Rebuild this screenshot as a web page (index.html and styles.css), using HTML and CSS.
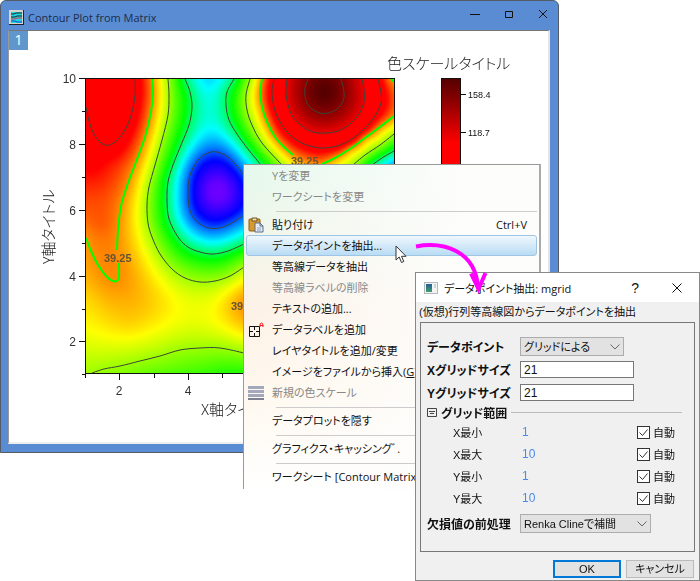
FILE: index.html
```html
<!DOCTYPE html>
<html lang="ja">
<head>
    <meta charset="UTF-8">
    <meta name="viewport" content="width=device-width, initial-scale=1.0">
    <title>Contour Plot from Matrix</title>
    <link rel="stylesheet" href="styles.css">
</head>
<body>
    <div class="desktop">

        <!-- Graph window -->
        <section class="graph-window">
            <header class="graph-titlebar">
                <svg class="app-icon" width="15" height="15" viewBox="0 0 15 15">
                    <rect width="15" height="15" fill="#222"/>
                    <rect width="14" height="14" fill="#d8d4cc"/>
                    <rect x="2" y="2" width="11" height="11" fill="#18d8e0"/>
                    <path d="M2 4h3l2-1h6M2 7h4l2-1h5" stroke="#222" fill="none"/>
                    <path d="M2 9h4l2-1h5" stroke="#e03060" fill="none"/>
                    <path d="M2 11h4l2 1h5" stroke="#2040d0" fill="none"/>
                </svg>
                <h1>Contour Plot from Matrix</h1>
                <div class="window-buttons">
                    <button type="button" aria-label="Minimize"><svg width="10" height="10" viewBox="0 0 10 10"><path d="M0 5.5h10"/></svg></button>
                    <button type="button" aria-label="Maximize"><svg width="10" height="10" viewBox="0 0 10 10"><path d="M1.5 2.5h7v6h-7z"/></svg></button>
                    <button type="button" aria-label="Close"><svg width="10" height="10" viewBox="0 0 10 10"><path d="M1 1l8 8M9 1l-8 8"/></svg></button>
                </div>
            </header>
            <div class="graph-page">
                <span class="layer-badge">1</span>
                <svg class="graph" width="540" height="411" viewBox="9 31 540 411">
                    <defs>
                        <linearGradient id="scale" x1="0" y1="0" x2="0" y2="1">
                            <stop offset="0" stop-color="#560000"/>
                            <stop offset="0.17" stop-color="#7d0000"/>
                            <stop offset="0.65" stop-color="#ff0000"/>
                        </linearGradient>
                    </defs>
                    <foreignObject x="86" y="79" width="308" height="295">
                        <canvas id="field" class="field" width="154" height="148"></canvas>
                    </foreignObject>
                    <g id="contours" class="contours"></g>
                    <rect x="85.5" y="78.5" width="309" height="295" fill="none" stroke="#111"/>
                    <path class="ticks" d="M79 78.5h7M82 111.5h4M79 144.5h7M82 177.5h4M79 210.5h7M82 243.5h4M79 276.5h7M82 309.5h4M79 341.5h7M82 374.5h4M85.5 374v4M119.5 374v6M154.5 374v4M188.5 374v6M222.5 374v4"/>
                    <g class="axis-text" text-anchor="end">
                        <text x="76" y="83">10</text>
                        <text x="76" y="149">8</text>
                        <text x="76" y="215">6</text>
                        <text x="76" y="281">4</text>
                        <text x="76" y="346">2</text>
                    </g>
                    <g class="axis-text" text-anchor="middle">
                        <text x="119" y="395">2</text>
                        <text x="188" y="395">4</text>
                    </g>
                    <g class="contour-text">
                        <text x="104" y="262">39.25</text>
                        <text x="231" y="310">39.25</text>
                        <text x="291" y="165">39.25</text>
                    </g>
                    <text class="graph-title" x="201" y="415">X軸タイトル</text>
                    <text class="graph-title" transform="translate(54 264) rotate(-90)">Y軸タイトル</text>
                    <text class="graph-title" x="387" y="69">色スケールタイトル</text>
                    <rect x="441.5" y="78.5" width="19" height="100" fill="url(#scale)" stroke="#111"/>
                    <path class="ticks" d="M461 94.5h5M461 132.5h5"/>
                    <g class="scale-text">
                        <text x="468" y="98">158.4</text>
                        <text x="468" y="136">118.7</text>
                    </g>
                </svg>
            </div>
        </section>

        <!-- Context menu -->
        <menu class="context-menu">
            <li><button type="button" disabled>Yを変更</button></li>
            <li><button type="button" disabled>ワークシートを変更</button></li>
            <li class="separator"></li>
            <li>
                <button type="button">
                    <svg class="menu-icon" width="16" height="16" viewBox="0 0 16 16">
                        <rect x="1" y="2" width="11" height="12" rx="1" fill="#d99a2b" stroke="#8a5d18"/>
                        <path d="M4 1h5v3H4z" fill="#f3dfa0" stroke="#6b5530"/>
                        <path d="M7 6h5l3 3v6H7z" fill="#e4ebf5" stroke="#5c6c88"/>
                        <path d="M12 6v3h3" fill="none" stroke="#5c6c88"/>
                        <path d="M9 11h4M9 13h4" stroke="#8fa2c0"/>
                    </svg>
                    貼り付け<kbd>Ctrl+V</kbd>
                </button>
            </li>
            <li><button type="button" class="active">データポイントを抽出...</button></li>
            <li><button type="button">等高線データを抽出</button></li>
            <li><button type="button" disabled>等高線ラベルの削除</button></li>
            <li><button type="button">テキストの追加...</button></li>
            <li>
                <button type="button">
                    <svg class="menu-icon" width="16" height="16" viewBox="0 0 16 16">
                        <path d="M1.5 4.5h10v10h-10z" fill="none" stroke="#111"/>
                        <path d="M6.5 5v3M6.5 11v3M2 9.5h3M8 9.5h3" stroke="#111"/>
                        <path d="M12 5V3q0-2 1.500-2T15 3v2M12 3.500h3" fill="none" stroke="#f01818"/>
                    </svg>
                    データラベルを追加
                </button>
            </li>
            <li><button type="button">レイヤタイトルを追加/変更</button></li>
            <li><button type="button">イメージをファイルから挿入(<u>G</u>)...</button></li>
            <li>
                <button type="button" disabled>
                    <svg class="menu-icon" width="16" height="16" viewBox="0 0 16 16">
                        <path d="M0 2.500h16M0 6.500h16M0 10.500h16" stroke="#a3a8bc" stroke-width="3"/>
                        <path d="M0 14h16" stroke="#7d8194" stroke-width="2"/>
                    </svg>
                    新規の色スケール
                </button>
            </li>
            <li class="separator"></li>
            <li><button type="button">データプロットを隠す</button></li>
            <li class="separator"></li>
            <li><button type="button">グラフィクス・キャッシングﾞ.</button></li>
            <li class="separator"></li>
            <li><button type="button">ワークシート [Contour Matrix]</button></li>
        </menu>

        <!-- Extract dialog -->
        <form class="dialog" id="extract-form">
            <header class="dialog-titlebar">
                <svg width="14" height="12" viewBox="0 0 14 12">
                    <defs>
                        <linearGradient id="icon-fill" x1="0" y1="0" x2="0" y2="1">
                            <stop offset="0" stop-color="#2a5a94"/>
                            <stop offset="1" stop-color="#3fa070"/>
                        </linearGradient>
                    </defs>
                    <rect x="0.5" y="0.5" width="13" height="11" fill="#f4f4f4" stroke="#b4b8bc"/>
                    <rect x="2" y="2" width="6" height="8" fill="url(#icon-fill)"/>
                    <path d="M10 3h2M10 5h2" stroke="#9bb"/>
                </svg>
                <h2>データポイント抽出: mgrid</h2>
                <button type="button" class="help">?</button>
                <button type="button" aria-label="閉じる"><svg width="10" height="10" viewBox="0 0 10 10"><path d="M0.5 0.5l9 9M9.5 0.5l-9 9"/></svg></button>
            </header>
            <p class="description">(仮想)行列等高線図からデータポイントを抽出</p>
            <div class="panel">
                <div class="row">
                    <label for="data-points">データポイント</label>
                    <select id="data-points" class="short"><option>グリッドによる</option></select>
                </div>
                <div class="row">
                    <label for="x-size">Xグリッドサイズ</label>
                    <input type="text" id="x-size" value="21">
                </div>
                <div class="row">
                    <label for="y-size">Yグリッドサイズ</label>
                    <input type="text" id="y-size" value="21">
                </div>
                <fieldset>
                    <legend>
                        <svg width="10" height="9" viewBox="0 0 10 9"><path d="M0.5 0.5h9v8h-9zM2 3.5h6M3 5.5h4" fill="none" stroke="#444"/></svg>
                        グリッド範囲
                    </legend>
                    <div class="range-row"><span>X最小</span><output>1</output><label><input type="checkbox" checked>自動</label></div>
                    <div class="range-row"><span>X最大</span><output>10</output><label><input type="checkbox" checked>自動</label></div>
                    <div class="range-row"><span>Y最小</span><output>1</output><label><input type="checkbox" checked>自動</label></div>
                    <div class="range-row"><span>Y最大</span><output>10</output><label><input type="checkbox" checked>自動</label></div>
                </fieldset>
                <div class="row">
                    <label for="missing">欠損値の前処理</label>
                    <select id="missing"><option>Renka Clineで補間</option></select>
                </div>
            </div>
            <footer class="dialog-buttons">
                <button type="submit" class="default">OK</button>
                <button type="button">キャンセル</button>
            </footer>
        </form>

        <!-- Pointer and arrow from the menu item to the dialog -->
        <svg class="pointer" width="12" height="19" viewBox="0 0 12 19">
            <path d="M1 1v14l3.200-3 2.300 5.500 2.300-1-2.300-5.200H11z" fill="#fff" stroke="#333"/>
        </svg>
        <svg class="arrow" width="74" height="54" viewBox="414 240 74 54">
            <path d="M416 246.500c26-5 60 3 62 42" fill="none" stroke="#ff00ff" stroke-width="4"/>
            <path d="M471 273.500l7.500 15.500 7-16" fill="none" stroke="#ff00ff" stroke-width="4"/>
        </svg>
    </div>

    <script src="contour.js"></script>
</body>
</html>
```
FILE: styles.css
```css
* {
    box-sizing: border-box;
}

body {
    margin: 0;
    background-color: #fff;
    color: #111;
    font-family: "Open Sans", "Noto Sans CJK JP", sans-serif;
    font-size: 11px;
}

button,
input,
select {
    font: inherit;
    color: inherit;
}

.desktop {
    position: relative;
    min-height: 581px;
    overflow: hidden;
}

/* Graph window */
.graph-window {
    margin-right: 141px;
    padding: 0 8px 8px 7px;
    background-color: #5a8cd4;
    border: 1px solid #555b66;
    border-radius: 6px 6px 0 0;
}

.graph-titlebar {
    display: flex;
    align-items: center;
    gap: 4px;
    height: 29px;
    padding-top: 4px;
    padding-left: 1px;
}

.graph-titlebar h1 {
    flex: 1;
    margin: 0;
    color: #1c2c48;
    font-size: 11px;
    font-weight: normal;
}

.window-buttons {
    display: flex;
    gap: 24px;
    padding-right: 2px;
    padding-bottom: 8px;
}

.window-buttons button,
.dialog-titlebar button {
    display: flex;
    padding: 0;
    background: none;
    border: none;
}

.window-buttons path,
.dialog-titlebar button path {
    fill: none;
    stroke: #111;
}

.graph-page {
    position: relative;
    overflow: hidden;
    background-color: #fff;
    border-top: 1px solid #777;
    border-left: 1px solid #999;
    border-right: 2px solid #e4e4e4;
    border-bottom: 2px solid #eee;
}

.layer-badge {
    position: absolute;
    top: 0;
    left: 0;
    width: 19px;
    height: 19px;
    background-color: #5f97cc;
    color: #fff;
    font-size: 14px;
    line-height: 18px;
    text-align: center;
}

.graph {
    display: block;
}

.field {
    display: block;
    width: 308px;
    height: 295px;
}

.contours path {
    fill: none;
    stroke: #3c4438;
}

.contours .main {
    stroke: #00ff00;
    stroke-width: 2;
}

.ticks {
    fill: none;
    stroke: #111;
}

.axis-text {
    font: 12px "Liberation Sans", sans-serif;
    fill: #333;
}

.contour-text {
    font: bold 11px "Liberation Sans", sans-serif;
    fill: #665533;
}

.scale-text {
    font: 9px "Liberation Sans", sans-serif;
    fill: #111;
}

.graph-title {
    font: 300 15px "Noto Sans CJK JP", sans-serif;
    fill: #222;
    font-feature-settings: "palt";
}

/* Context menu */
.context-menu {
    position: absolute;
    top: 164px;
    left: 243px;
    right: 159px;
    margin: 0;
    padding: 0 2px 2px;
    list-style: none;
    background: linear-gradient(to right, rgba(253, 253, 252, 0), #fdfdfc 75%),
        linear-gradient(#e4f9ec, #fdf1e6 45%, #fff8ee 70%, #fff);
    border: 1px solid #999;
    border-right: 2px solid #aaa;
    border-bottom: none;
    font-feature-settings: "palt";
}

.context-menu button {
    display: block;
    position: relative;
    width: 100%;
    height: 21px;
    padding: 0 9px 0 25px;
    background: none;
    border: 1px solid transparent;
    border-radius: 3px;
    line-height: 19px;
    text-align: left;
    white-space: nowrap;
}

.context-menu button:disabled {
    color: #888;
}

.context-menu button:hover:enabled,
.context-menu .active {
    background: linear-gradient(#f0f7fd, #b9dcf4);
    border-color: #9fc5e4;
}

.context-menu kbd {
    float: right;
    font: inherit;
}

.menu-icon {
    position: absolute;
    left: 1px;
    top: 2px;
}

.separator {
    height: 1px;
    margin: 4px 0 2px 30px;
    background-color: #ccc;
}

/* Extract dialog */
.dialog {
    position: absolute;
    top: 272px;
    left: 415px;
    right: 0;
    padding-bottom: 2px;
    background-color: #f0f0f0;
    border: 1px solid #888;
    font-family: "Liberation Sans", "Noto Sans CJK JP", sans-serif;
    font-feature-settings: "palt";
}

.dialog-titlebar {
    display: flex;
    align-items: center;
    gap: 6px;
    height: 29px;
    padding: 0 17px 0 8px;
    background-color: #fff;
}

.dialog-titlebar h2 {
    flex: 1;
    margin: 0;
    font-family: "Open Sans", "Noto Sans CJK JP", sans-serif;
    font-size: 11px;
    font-weight: normal;
}

.dialog-titlebar .help {
    margin-right: 27px;
    font-size: 14px;
}

.description {
    margin: 0;
    padding-left: 3px;
    line-height: 20px;
}

.panel {
    margin: 0 4px 8px;
    padding: 12px 12px 16px 6px;
    border: 1px solid #777;
}

.row {
    display: flex;
    align-items: center;
    height: 23px;
}

.row label {
    flex: none;
    width: 93px;
    font-size: 12px;
    font-weight: bold;
}

.row input {
    width: 114px;
    height: 17px;
    padding: 0 3px;
    background-color: #fff;
    border: 1px solid #777;
    font-size: 12px;
}

.row select {
    width: 131px;
    height: 19px;
    padding: 0 3px;
    appearance: none;
    background: #e2e2e2 url("data:image/svg+xml,%3Csvg xmlns='http://www.w3.org/2000/svg' width='10' height='6'%3E%3Cpath d='M.5.5L5 5 9.5.5' fill='none' stroke='%23666'/%3E%3C/svg%3E") no-repeat right 3px center;
    border: 1px solid #adadad;
    border-radius: 0;
}

.row .short {
    width: 104px;
}

fieldset {
    margin: 0;
    padding: 0 0 3px;
    border: none;
}

legend {
    display: flex;
    align-items: center;
    gap: 4px;
    width: 100%;
    height: 17px;
    padding: 0;
    font-size: 12px;
    font-weight: bold;
}

legend::after {
    content: "";
    flex: 1;
    border-top: 1px solid #bbb;
}

.range-row {
    display: flex;
    align-items: center;
    height: 22px;
    padding-left: 26px;
}

.range-row span {
    width: 69px;
}

.range-row output {
    flex: 1;
    color: #4a8ae8;
    font-size: 12px;
}

.range-row label {
    display: flex;
    align-items: center;
    gap: 3px;
    width: 45px;
}

.range-row input {
    width: 13px;
    height: 13px;
    margin: 0;
    appearance: none;
    background-color: #fff;
    border: 1px solid #333;
}

.range-row input:checked {
    background-image: url("data:image/svg+xml,%3Csvg xmlns='http://www.w3.org/2000/svg' width='11' height='11'%3E%3Cpath d='M1.5 5.5l3 3 5-6' fill='none' stroke='%23333'/%3E%3C/svg%3E");
}

.dialog-buttons {
    display: flex;
    justify-content: flex-end;
    gap: 5px;
    padding-right: 5px;
}

.dialog-buttons button {
    width: 68px;
    height: 18px;
    padding: 0;
    background-color: #e2e2e2;
    border: 1px solid #bbb;
    line-height: 14px;
}

.dialog-buttons .default {
    border: 2px solid #0078d7;
}

/* Overlays */
.pointer {
    position: absolute;
    top: 245px;
    left: 395px;
}

.arrow {
    position: absolute;
    top: 240px;
    left: 414px;
    pointer-events: none;
}
```
FILE: contour.js
```js
// Contour lines: level index and points in graph coordinates
var lines = [
    [2, [[86,107],[88,117],[92,130],[98,140],[105,145],[112,144],[120,137],[127,126],[132,112],[135,95],[135,79]]],
    [1, [[152,79],[153,93],[151,112],[145,137],[136,162],[127,186],[121,206],[118,230],[117,250]]],
    [1, [[119,263],[119,277],[117,281],[113,281],[107,277],[98,265],[91,251],[86,238]]],
    [0, [[168,79],[169,95],[168,115],[162,140],[155,165],[149,187],[147,205],[148,223],[152,237],[160,254],[172,269],[185,278],[200,282],[215,281],[230,276],[244,267]]],
    [-1, [[185,79],[190,92],[192,107],[189,125],[181,145],[173,165],[168,182],[167,200],[169,219],[178,237],[188,247],[200,252],[213,254],[228,251],[244,244]]],
    [-2, [[244,175],[237,166],[228,157],[217,152],[208,153],[198,160],[190,175],[188,190],[189,207],[193,217],[200,224],[209,228],[219,228],[230,224],[244,215]]],
    [-1, [[234,79],[227,92],[226,105],[229,120],[237,134],[248,149],[261,165]]],
    [0, [[250,79],[246,95],[247,110],[252,125],[262,143],[282,165]]],
    [1, [[262,79],[260,93],[262,107],[267,122],[275,137],[285,148],[293,155]]],
    [1, [[322,164],[335,158],[350,149],[365,138],[380,127],[394,116]]],
    [1, [[391,79],[394,82]]],
    [2, [[274,79],[272,92],[274,107],[279,120],[287,132],[298,141],[310,146],[322,148],[337,146],[352,139],[365,128],[375,116],[381,103],[381,93],[378,79]]],
    [3, [[287,79],[286,92],[288,105],[293,117],[302,126],[313,132],[325,133],[338,131],[350,124],[359,114],[364,102],[364,90],[362,79]]],
    [4, [[308,79],[305,88],[305,96],[307,103],[312,109],[320,113],[328,113],[337,109],[343,101],[344,92],[341,79]]],
    [0, [[353,165],[365,155],[380,145],[394,134]]],
    [-1, [[372,165],[382,158],[394,151]]],
    [0, [[92,373],[104,369],[120,366],[140,361],[160,356],[180,350],[200,348],[220,348],[244,353]]]
];

// Single values between the lines: x, y, level
var spots = [
    [325,91,4.5], [217,192,-3.1], [210,80,-1.55], [210,105,-1.35], [105,100,2.3],
    [95,170,1.7], [110,165,1.6], [87,200,1.35], [102,225,1.25], [122,300,0.85],
    [88,300,0.65], [88,340,0.35], [130,325,0.65], [160,300,0.6], [185,315,0.4],
    [200,328,0.3], [215,300,0.4], [244,302,0.95], [150,373,-0.25], [200,373,-0.45],
    [244,373,-0.55], [394,164,-1.7], [300,230,-1], [300,330,1], [394,280,0], [394,373,0]
];

// Colour scale: level, r, g, b
var scale = [
    [-3, 106, 0, 255], [-2.3, 0, 0, 255], [-1.45, 0, 255, 255], [-0.75, 0, 255, 0],
    [0.45, 255, 255, 0], [1.7, 255, 0, 0], [2.85, 255, 0, 0], [4.5, 86, 0, 0]
];

function color(v) {
    if (v <= scale[0][0]) return scale[0].slice(1);
    for (var i = 1; i < scale.length; i++) {
        var a = scale[i - 1], b = scale[i];
        if (v <= b[0]) {
            var t = (v - a[0]) / (b[0] - a[0]);
            return [1, 2, 3].map(function(k) { return a[k] + (b[k] - a[k]) * t; });
        }
    }
    return scale[scale.length - 1].slice(1);
}

// Thin plate spline kernel, r2 is the squared distance
function kernel(r2) {
    return r2 > 0 ? r2 * Math.log(r2) : 0;
}

function solve(m) {
    var n = m.length;
    for (var c = 0; c < n; c++) {
        var p = c;
        for (var r = c + 1; r < n; r++) if (Math.abs(m[r][c]) > Math.abs(m[p][c])) p = r;
        var tmp = m[c]; m[c] = m[p]; m[p] = tmp;
        for (r = c + 1; r < n; r++) {
            var f = m[r][c] / m[c][c];
            for (var k = c; k <= n; k++) m[r][k] -= f * m[c][k];
        }
    }
    var w = [];
    for (r = n - 1; r >= 0; r--) {
        var s = m[r][n];
        for (k = r + 1; k < n; k++) s -= m[r][k] * w[k];
        w[r] = s / m[r][r];
    }
    return w;
}

function drawField() {
    var pts = spots.slice();
    lines.forEach(function(line) {
        line[1].forEach(function(p) { pts.push([p[0], p[1], line[0]]); });
    });
    pts = pts.map(function(p) { return [p[0] / 100, p[1] / 100, p[2]]; });

    var n = pts.length;
    var m = pts.map(function(p, i) {
        var row = pts.map(function(q, j) {
            var dx = p[0] - q[0], dy = p[1] - q[1];
            return i === j ? 0.002 : kernel(dx * dx + dy * dy);
        });
        return row.concat([1, p[0], p[1], p[2]]);
    });
    for (var k = 0; k < 3; k++) {
        m.push(pts.map(function(p) { return k === 0 ? 1 : p[k - 1]; }).concat([0, 0, 0, 0]));
    }
    var w = solve(m);

    var canvas = document.getElementById("field");
    var ctx = canvas.getContext("2d");
    var img = ctx.createImageData(canvas.width, canvas.height);
    for (var y = 0; y < canvas.height; y++) {
        for (var x = 0; x < canvas.width; x++) {
            var gx = (87 + x * 2) / 100, gy = (80 + y * 2) / 100;
            var v = w[n] + w[n + 1] * gx + w[n + 2] * gy;
            for (var i = 0; i < n; i++) {
                var dx = gx - pts[i][0], dy = gy - pts[i][1];
                v += w[i] * kernel(dx * dx + dy * dy);
            }
            var c = color(v), o = (y * canvas.width + x) * 4;
            img.data[o] = c[0];
            img.data[o + 1] = c[1];
            img.data[o + 2] = c[2];
            img.data[o + 3] = 255;
        }
    }
    ctx.putImageData(img, 0, 0);
}

function drawLines() {
    var group = document.getElementById("contours");
    lines.forEach(function(line) {
        var p = line[1], d = "M" + p[0];
        for (var i = 0; i < p.length - 1; i++) {
            var a = p[i - 1] || p[i], b = p[i], c = p[i + 1], e = p[i + 2] || c;
            d += "C" + [b[0] + (c[0] - a[0]) / 6, b[1] + (c[1] - a[1]) / 6,
                c[0] - (e[0] - b[0]) / 6, c[1] - (e[1] - b[1]) / 6, c[0], c[1]].join(" ");
        }
        var path = document.createElementNS("http://www.w3.org/2000/svg", "path");
        path.setAttribute("d", d);
        if (line[0] === 1) path.setAttribute("class", "main");
        group.appendChild(path);
    });
}

drawField();
drawLines();
```
